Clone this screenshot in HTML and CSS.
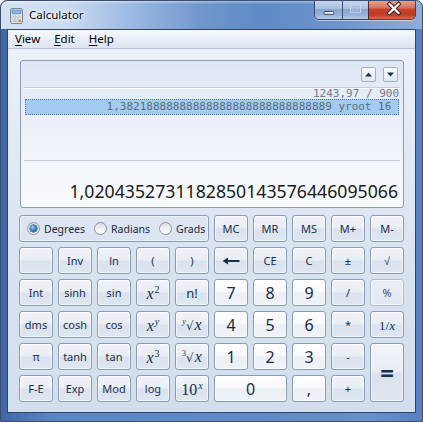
FILE: index.html
```html
<!DOCTYPE html>
<html>
<head>
<meta charset="utf-8">
<title>Calculator</title>
<link rel="stylesheet" href="styles.css">
</head>
<body>
<div class="window">
  <div class="titlebar">
    <svg class="app-icon" width="13" height="16" viewBox="0 0 13 16">
      <rect x="0.5" y="0.5" width="12" height="15" rx="1.5" fill="#e3e7ec" stroke="#7d8796"/>
      <rect x="2" y="2" width="9" height="3.5" fill="#8dbbe6" stroke="#4f7fb5" stroke-width="0.7"/>
      <g fill="#ffffff" stroke="#a4adb9" stroke-width="0.5">
        <rect x="2" y="7" width="2.2" height="1.6"/><rect x="5.4" y="7" width="2.2" height="1.6"/><rect x="8.8" y="7" width="2.2" height="1.6"/>
        <rect x="2" y="9.6" width="2.2" height="1.6"/><rect x="5.4" y="9.6" width="2.2" height="1.6"/><rect x="8.8" y="9.6" width="2.2" height="1.6"/>
        <rect x="2" y="12.2" width="2.2" height="1.6"/><rect x="5.4" y="12.2" width="2.2" height="1.6"/>
      </g>
      <rect x="8.8" y="12.2" width="2.2" height="1.6" fill="#f0a046" stroke="#c07020" stroke-width="0.5"/>
    </svg>
    <span class="title">Calculator</span>
    <div class="caption">
      <div class="cap cap-min">
        <svg width="28" height="18" viewBox="0 0 28 18"><rect x="9.5" y="11.5" width="10" height="3" rx="0.8" fill="#ffffff" stroke="#2c3d5c"/></svg>
      </div>
      <div class="cap cap-max">
        <svg width="25" height="18" viewBox="0 0 25 18"><rect x="7.5" y="4.5" width="10" height="8" fill="none" stroke="#c4d2e6" stroke-width="1"/><rect x="9.5" y="6.5" width="6" height="4" fill="none" stroke="#aabcd8" stroke-width="1"/></svg>
      </div>
      <div class="cap cap-close">
        <svg width="46" height="18" viewBox="0 0 46 18"><path d="M20.5 4 L29.5 13 M29.5 4 L20.5 13" stroke="#3a2424" stroke-width="4.2" stroke-linecap="square"/><path d="M20.5 4 L29.5 13 M29.5 4 L20.5 13" stroke="#ffffff" stroke-width="2.2" stroke-linecap="square"/></svg>
      </div>
    </div>
  </div>
  <div class="client">
    <div class="menubar">
      <span class="menu-item"><u>V</u>iew</span>
      <span class="menu-item"><u>E</u>dit</span>
      <span class="menu-item"><u>H</u>elp</span>
    </div>
    <div class="content">
      <div class="display">
        <div class="disp-top">
          <span class="arrow"><svg width="13" height="13" viewBox="0 0 13 13"><path d="M3 8.5 L6.5 4.5 L10 8.5 Z" fill="#1e3354"/></svg></span>
          <span class="arrow"><svg width="13" height="13" viewBox="0 0 13 13"><path d="M3 4.5 L10 4.5 L6.5 8.5 Z" fill="#1e3354"/></svg></span>
        </div>
        <div class="history">
          <div class="hline">1243,97 / 900</div>
          <div class="hline sel">1,38218888888888888888888888888889 yroot 16&nbsp;</div>
        </div>
        <div class="result">1,0204352731182850143576446095066</div>
      </div>
      <div class="keys">
        <div class="radios">
          <span class="radio on"></span><span class="rlabel">Degrees</span>
          <span class="radio"></span><span class="rlabel">Radians</span>
          <span class="radio"></span><span class="rlabel">Grads</span>
        </div>
        <div class="k">MC</div>
        <div class="k">MR</div>
        <div class="k">MS</div>
        <div class="k">M+</div>
        <div class="k">M-</div>

        <div class="k"></div>
        <div class="k">Inv</div>
        <div class="k">ln</div>
        <div class="k">(</div>
        <div class="k">)</div>
        <div class="k"><svg width="18" height="8" viewBox="0 0 18 8"><path d="M0.5 4 L6 0.5 L6 7.5 Z" fill="#1b2f4d"/><rect x="5" y="3" width="12.5" height="2" fill="#1b2f4d"/></svg></div>
        <div class="k">CE</div>
        <div class="k">C</div>
        <div class="k">±</div>
        <div class="k">√</div>

        <div class="k">Int</div>
        <div class="k">sinh</div>
        <div class="k">sin</div>
        <div class="k m"><span class="lbl"><i>x</i><sup>2</sup></span></div>
        <div class="k big">n!</div>
        <div class="k n">7</div>
        <div class="k n">8</div>
        <div class="k n">9</div>
        <div class="k">/</div>
        <div class="k dis">%</div>

        <div class="k">dms</div>
        <div class="k">cosh</div>
        <div class="k">cos</div>
        <div class="k m"><span class="lbl"><i>x</i><sup><i>y</i></sup></span></div>
        <div class="k m"><span class="lbl"><span class="rt"><sup class="idx"><i>y</i></sup>√</span><i>x</i></span></div>
        <div class="k n">4</div>
        <div class="k n">5</div>
        <div class="k n">6</div>
        <div class="k">*</div>
        <div class="k m small"><span class="lbl">1/<i>x</i></span></div>

        <div class="k">π</div>
        <div class="k">tanh</div>
        <div class="k">tan</div>
        <div class="k m"><span class="lbl"><i>x</i><sup>3</sup></span></div>
        <div class="k m"><span class="lbl"><span class="rt"><sup class="idx">3</sup>√</span><i>x</i></span></div>
        <div class="k n">1</div>
        <div class="k n">2</div>
        <div class="k n">3</div>
        <div class="k">-</div>
        <div class="k eq">=</div>

        <div class="k">F-E</div>
        <div class="k">Exp</div>
        <div class="k">Mod</div>
        <div class="k">log</div>
        <div class="k m"><span class="lbl">10<sup><i>x</i></sup></span></div>
        <div class="k n zero">0</div>
        <div class="k n">,</div>
        <div class="k">+</div>
      </div>
    </div>
  </div>
</div>
</body>
</html>
```

FILE: styles.css
```css
* {
  box-sizing: border-box;
}

html, body {
  margin: 0;
  padding: 0;
}

body {
  width: 423px;
  height: 422px;
  overflow: hidden;
  background: #ffffff;
  font-family: "Noto Sans", "Liberation Sans", sans-serif;
}

.window {
  width: 423px;
  height: 422px;
  border: 1px solid #3c4f70;
  border-radius: 7px 7px 0 0;
  background: linear-gradient(to right, #3e66a8 0%, #5a86c5 12%, #5f8ac7 60%, #6891cb 88%, #5580c2 100%);
  display: flex;
  flex-direction: column;
  overflow: hidden;
}

.titlebar {
  height: 28px;
  flex: none;
  display: flex;
  align-items: flex-start;
  border-radius: 6px 6px 0 0;
  background:
    linear-gradient(to bottom, rgba(255, 255, 255, 0.45) 0, rgba(255, 255, 255, 0) 3px),
    linear-gradient(to right, #d4e2f3 0%, #c9daef 16%, #98b7e0 32%, #6f96cd 48%, #5f8ac7 62%, #6d94cc 80%, #8eaedb 100%);
}

.app-icon {
  margin: 7px 0 0 9px;
  flex: none;
}

.title {
  margin: 6px 0 0 6px;
  font-size: 11.5px;
  line-height: 16px;
  color: #000000;
  text-shadow: 0 0 6px #ffffff, 0 0 4px #ffffff, 0 0 2px #ffffff;
}

.caption {
  margin: -1px 6px 0 auto;
  height: 20px;
  display: flex;
  border: 1px solid #34466a;
  border-top: none;
  border-radius: 0 0 5px 5px;
  overflow: hidden;
  box-shadow: 0 1px 0 rgba(255, 255, 255, 0.5);
}

.cap {
  height: 19px;
  display: flex;
  align-items: flex-start;
}

.cap-min {
  width: 28px;
  border-right: 1px solid #3c4f72;
  background: linear-gradient(to bottom, #c9d9ee 0%, #a9c0e0 45%, #8ba7d0 50%, #98b3da 80%, #b7cbe8 100%);
}

.cap-max {
  width: 26px;
  border-right: 1px solid #4a2a2a;
  background: linear-gradient(to bottom, #c9d9ee 0%, #a9c0e0 45%, #8ba7d0 50%, #98b3da 80%, #b7cbe8 100%);
}

.cap-close {
  width: 46px;
  background: linear-gradient(to bottom, #e8a693 0%, #d8735d 40%, #c7432b 50%, #c03a22 75%, #d9694f 100%);
}

.client {
  margin: 0 6px;
  height: 384px;
  flex: none;
  border: 1px solid #2f4468;
  background: linear-gradient(to bottom, #edf2f9 0%, #e3eaf4 30%, #d9e3f0 60%, #d3deec 100%);
  display: flex;
  flex-direction: column;
}

.menubar {
  height: 19px;
  flex: none;
  display: flex;
  border-bottom: 1px solid #b7c3d5;
  background: linear-gradient(to bottom, #f6f8fc 0%, #e9eef7 50%, #dce4f0 100%);
}

.menu-item {
  padding: 0 7px;
  font-size: 11.5px;
  line-height: 18px;
  color: #000000;
}

.menu-item u {
  text-decoration-thickness: 1px;
  text-underline-offset: 2px;
}

.content {
  padding: 11px 0 10px;
  display: flex;
  flex-direction: column;
}

.display {
  margin-left: 12px;
  width: 384px;
  height: 148px;
  border: 1px solid #8e9cb1;
  border-radius: 3px;
  background: linear-gradient(to bottom, #dde7f4 0%, #e9eff8 35%, #f3f6fb 70%, #f8fafd 100%);
  display: flex;
  flex-direction: column;
}

.disp-top {
  margin: 0 3px;
  height: 27px;
  flex: none;
  padding: 6px 2px 0 0;
  display: flex;
  justify-content: flex-end;
  gap: 7px;
  border-bottom: 1px solid #c3ccd9;
  box-shadow: 0 1px 0 #ffffff;
}

.arrow {
  width: 15px;
  height: 15px;
  border: 1px solid #a3b1c5;
  border-radius: 2px;
  background: linear-gradient(to bottom, #fbfcfe 0%, #eef2f8 50%, #e1e8f2 100%);
  display: flex;
  align-items: center;
  justify-content: center;
}

.history {
  margin: 0 3px;
  height: 73px;
  flex: none;
  border-bottom: 1px solid #c5cdd9;
  font-family: "DejaVu Sans Mono", "Liberation Mono", monospace;
  font-size: 11px;
  color: #767d8a;
}

.hline {
  height: 11px;
  line-height: 11px;
  text-align: right;
  padding-right: 1px;
  white-space: pre;
}

.hline.sel {
  height: 16px;
  line-height: 14px;
  margin: 0 1px;
  padding-right: 0;
  background: #a4cbf2;
  border: 1px dotted #4d7cb6;
  color: #5b6b80;
}

.result {
  flex: 1;
  margin: 0 3px;
  padding: 0 2px 4px 0;
  display: flex;
  align-items: flex-end;
  justify-content: flex-end;
  font-size: 17.7px;
  line-height: 24px;
  color: #1a1a1a;
  white-space: nowrap;
}

.keys {
  margin: 7px 0 0 11px;
  display: grid;
  grid-template-columns: repeat(10, 34px);
  grid-template-rows: repeat(6, 27px);
  gap: 5px;
}

.radios {
  grid-column: span 5;
  border: 1px solid #8f9db2;
  border-radius: 3px;
  display: flex;
  align-items: center;
  padding-left: 7px;
  box-shadow: inset 0 0 0 1px rgba(255, 255, 255, 0.45);
}

.radio {
  width: 13px;
  height: 13px;
  border-radius: 50%;
  border: 1px solid #8a97a9;
  background: linear-gradient(to bottom, #d9dde3 0%, #eef0f3 50%, #ffffff 100%);
  display: flex;
  align-items: center;
  justify-content: center;
  flex: none;
}

.radio.on::after {
  content: "";
  width: 7px;
  height: 7px;
  border-radius: 50%;
  background: radial-gradient(circle at 40% 35%, #9fd0f6 0%, #3a7fc8 45%, #13407d 100%);
  box-shadow: 0 0 0 0.5px #1b3c66;
}

.rlabel {
  margin: 0 9px 0 4px;
  font-size: 10.5px;
  color: #1d2a3c;
}

.k {
  border: 1px solid #8c9bb1;
  border-radius: 3px;
  background: linear-gradient(to bottom, #f1f4f9 0%, #e8eef5 47%, #d9e2ee 53%, #dfe6f0 100%);
  box-shadow: inset 0 0 0 1px rgba(255, 255, 255, 0.6);
  display: flex;
  align-items: center;
  justify-content: center;
  font-size: 11px;
  color: #1b2f4d;
  white-space: nowrap;
}

.k.n {
  background: linear-gradient(to bottom, #ffffff 0%, #f7f9fc 47%, #ebf0f6 53%, #f0f3f8 100%);
  font-size: 16px;
  color: #1e2c40;
}

.k.dis {
  border-color: #b1bccb;
  background: linear-gradient(to bottom, #e9eef5 0%, #e3e9f1 100%);
  color: #3c4d66;
}

.k.big {
  font-size: 13px;
}

.k.zero {
  grid-column: span 2;
}

.k.eq {
  grid-row: span 2;
  font-size: 24px;
  font-weight: bold;
}

.k.m {
  font-family: "Liberation Serif", "DejaVu Serif", serif;
  font-size: 16px;
}

.k.m.small {
  font-size: 13px;
}

.lbl {
  display: inline-block;
  line-height: 18px;
  padding-top: 2px;
}

.lbl sup {
  font-size: 10px;
  line-height: 0;
  vertical-align: 6px;
  margin-left: 1px;
}

.rt {
  font-family: "DejaVu Serif", serif;
  font-size: 12px;
  margin-right: 1px;
}

.rt .idx {
  font-family: "Liberation Serif", serif;
  font-size: 8px;
  vertical-align: 6px;
  margin-left: 0;
  margin-right: 0;
}
```
